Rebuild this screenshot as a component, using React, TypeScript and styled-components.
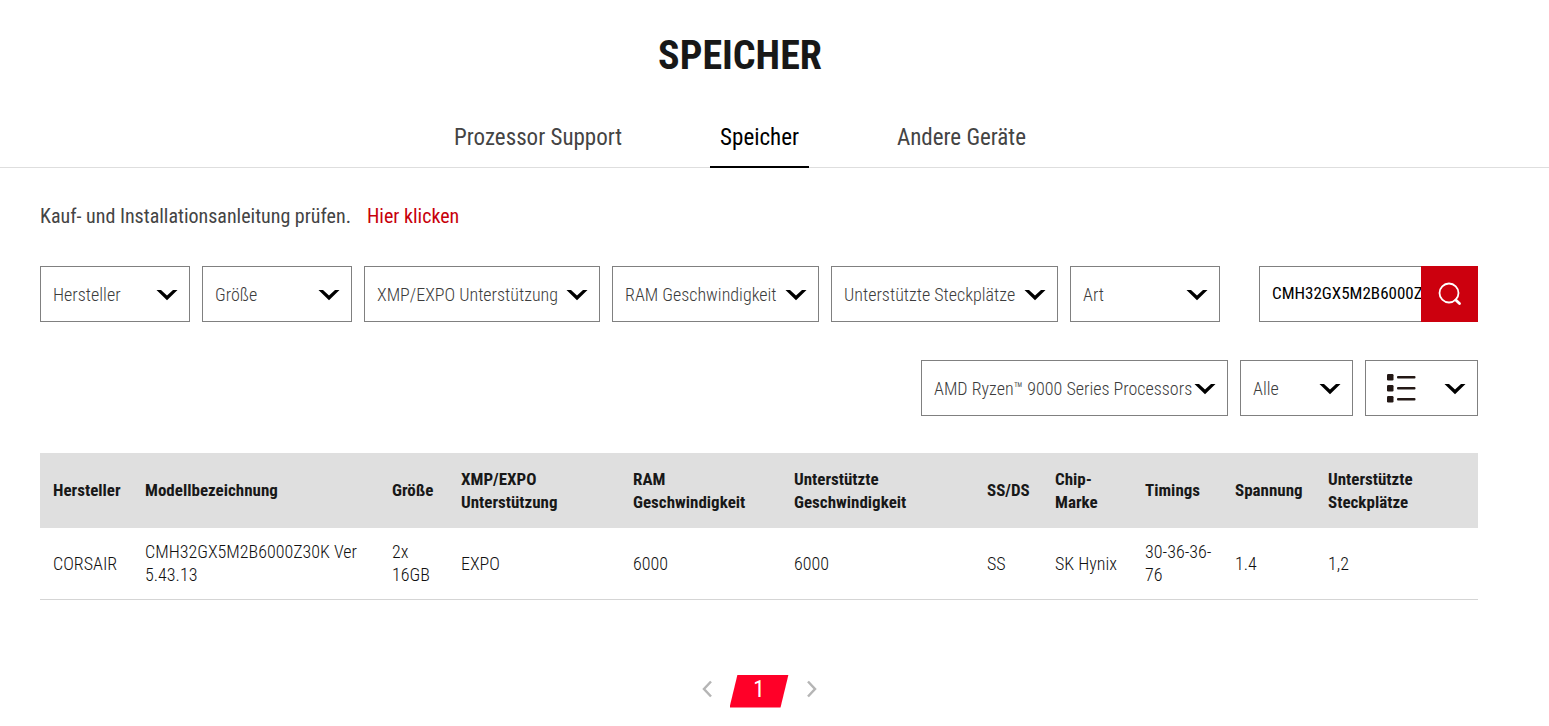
import React, { useState } from "react";
import styled, { createGlobalStyle } from "styled-components";

const GlobalStyle = createGlobalStyle`
  *, *::before, *::after { box-sizing: border-box; }
  body {
    margin: 0;
    background: #fff;
    color: #111;
    font-family: "Roboto Condensed", "Liberation Sans Narrow", Roboto, sans-serif;
    font-size: 18px;
    font-weight: 300;
  }
  button, input, select { font: inherit; }
`;

const Header = styled.header`
  padding: 32px 69px 0 0;
  border-bottom: 1px solid #dedede;
`;

const Title = styled.h1`
  margin: 0 0 36px;
  text-align: center;
  font-size: 40px;
  line-height: 48px;
  font-weight: 700;
  color: #181818;
`;

const Tabs = styled.nav`
  display: flex;
  justify-content: center;
  gap: 78px;
  margin-bottom: -1px;
`;

const Tab = styled.a<{ $active?: boolean }>`
  padding: 8px 10px 14px;
  font-size: 23px;
  line-height: 28px;
  font-weight: 400;
  text-decoration: none;
  color: ${(p) => (p.$active ? "#000" : "#444")};
  border-bottom: 2px solid ${(p) => (p.$active ? "#000" : "transparent")};
`;

const Main = styled.main`
  padding: 36px 71px 18px 40px;
`;

const Notice = styled.p`
  display: flex;
  gap: 16px;
  margin: 0 0 38px;
  font-size: 20px;
  line-height: 24px;
  font-weight: 400;
  color: #444;
`;

const NoticeLink = styled.a`
  color: #c7000b;
  text-decoration: none;
`;

const FilterRow = styled.div`
  display: flex;
  justify-content: space-between;
  margin-bottom: 38px;
`;

const Group = styled.div`
  display: flex;
  gap: 12px;
`;

const ViewRow = styled(Group)`
  justify-content: flex-end;
  margin-bottom: 37px;
`;

const Field = styled.div<{ $width: number }>`
  position: relative;
  width: ${(p) => p.$width}px;
  height: 56px;
`;

const Select = styled.select`
  width: 100%;
  height: 100%;
  padding: 0 12px;
  appearance: none;
  border: 1px solid #808080;
  border-radius: 0;
  background: #fff;
  color: #3c3c3c;
`;

const Chevron = styled.svg`
  position: absolute;
  right: 12px;
  top: 23px;
  width: 22px;
  height: 12px;
  pointer-events: none;
`;

const ListIcon = styled.svg`
  position: absolute;
  left: 21px;
  top: 13px;
  width: 30px;
  height: 30px;
  pointer-events: none;
`;

const Search = styled.form`
  display: flex;
  width: 219px;
  height: 56px;
`;

const SearchInput = styled.input`
  flex: 1;
  min-width: 0;
  padding: 0 0 2px 12px;
  border: 1px solid #808080;
  border-right: 0;
  border-radius: 0;
  color: #000;
  font-size: 17px;
  font-weight: 400;
  background: #fff;
`;

const SearchButton = styled.button`
  display: grid;
  place-items: center;
  width: 57px;
  padding: 0;
  border: 0;
  background: #cc000e;
`;

const Table = styled.table`
  width: 100%;
  table-layout: fixed;
  border-collapse: collapse;
  line-height: 23px;
`;

const HeadCell = styled.th`
  height: 75px;
  padding: 0 8px 0 13px;
  text-align: left;
  font-size: 17px;
  font-weight: 700;
  color: #181818;
  background: #dfdfdf;
`;

const Cell = styled.td`
  height: 71px;
  padding: 0 8px 0 13px;
  border-bottom: 1px solid #d5d5d5;
`;

const Pager = styled.nav`
  display: flex;
  justify-content: center;
  gap: 18px;
  margin-top: 75px;
`;

const Arrow = styled.button`
  display: grid;
  place-items: center;
  width: 10px;
  height: 28px;
  padding: 0;
  border: 0;
  background: none;
`;

const Page = styled.button`
  width: 59px;
  height: 33px;
  padding: 0 0 2px;
  border: 0;
  background: #ff0028;
  clip-path: polygon(8px 0, 100% 0, 51px 100%, 0 100%);
  color: #fff;
  font-size: 23px;
  font-weight: 400;
  line-height: 28px;
`;

const filters = [
  { label: "Hersteller", width: 150 },
  { label: "Größe", width: 150 },
  { label: "XMP/EXPO Unterstützung", width: 236 },
  { label: "RAM Geschwindigkeit", width: 207 },
  { label: "Unterstützte Steckplätze", width: 227 },
  { label: "Art", width: 150 },
];

const columns = [
  { title: "Hersteller", width: 92, value: "CORSAIR" },
  { title: "Modellbezeichnung", width: 247, value: "CMH32GX5M2B6000Z30K Ver 5.43.13" },
  { title: "Größe", width: 69, value: "2x 16GB" },
  { title: "XMP/EXPO Unterstützung", width: 172, value: "EXPO" },
  { title: "RAM Geschwindigkeit", width: 161, value: "6000" },
  { title: "Unterstützte Geschwindigkeit", width: 193, value: "6000" },
  { title: "SS/DS", width: 68, value: "SS" },
  { title: "Chip-Marke", width: 90, value: "SK Hynix" },
  { title: "Timings", width: 90, value: "30-36-36-76" },
  { title: "Spannung", width: 93, value: "1.4" },
  { title: "Unterstützte Steckplätze", width: 163, value: "1,2" },
];

function Dropdown({ label, option = label, width, children }: {
  label: string;
  option?: string;
  width: number;
  children?: React.ReactNode;
}) {
  return (
    <Field $width={width}>
      <Select aria-label={label}>
        <option>{option}</option>
      </Select>
      {children}
      <Chevron viewBox="0 0 22 12" aria-hidden="true">
        <path d="M0.5 1H5L11 6.5L17 1H21.500L11 11.200Z" fill="#000" />
      </Chevron>
    </Field>
  );
}

export default function App() {
  const [query, setQuery] = useState("CMH32GX5M2B6000Z30K");

  return (
    <>
      <GlobalStyle />
      <Header>
        <Title>SPEICHER</Title>
        <Tabs>
          <Tab href="#cpu">Prozessor Support</Tab>
          <Tab href="#memory" $active aria-current="page">Speicher</Tab>
          <Tab href="#devices">Andere Geräte</Tab>
        </Tabs>
      </Header>
      <Main>
        <Notice>
          Kauf- und Installationsanleitung prüfen.
          <NoticeLink href="#guide">Hier klicken</NoticeLink>
        </Notice>
        <FilterRow>
          <Group>
            {filters.map((f) => (
              <Dropdown key={f.label} label={f.label} width={f.width} />
            ))}
          </Group>
          <Search onSubmit={(e) => e.preventDefault()}>
            <SearchInput
              aria-label="Suche"
              value={query}
              onChange={(e) => setQuery(e.target.value)}
            />
            <SearchButton type="submit" aria-label="Suchen">
              <svg width="24" height="24" viewBox="0 0 24 24" fill="none" stroke="#fff" strokeLinecap="round">
                <circle cx="11" cy="11" r="9.500" strokeWidth="1.800" />
                <path d="M17.800 18L21.500 21.500" strokeWidth="2.800" />
              </svg>
            </SearchButton>
          </Search>
        </FilterRow>
        <ViewRow>
          <Dropdown label="Prozessor" option="AMD Ryzen™ 9000 Series Processors" width={307} />
          <Dropdown label="Anzeige" option="Alle" width={113} />
          <Dropdown label="Ansicht" option="" width={113}>
            <ListIcon viewBox="0 0 30 30" aria-hidden="true" fill="#231815">
              {[1, 12, 23].map((y) => (
                <g key={y}>
                  <rect x="1" y={y} width="6.500" height="6.500" rx="1.200" />
                  <rect x="11" y={y + 2} width="18.500" height="2.400" rx="1" />
                </g>
              ))}
            </ListIcon>
          </Dropdown>
        </ViewRow>
        <Table>
          <colgroup>
            {columns.map((c) => (
              <col key={c.title} width={c.width} />
            ))}
          </colgroup>
          <thead>
            <tr>
              {columns.map((c) => (
                <HeadCell key={c.title} scope="col">{c.title}</HeadCell>
              ))}
            </tr>
          </thead>
          <tbody>
            <tr>
              {columns.map((c) => (
                <Cell key={c.title}>{c.value}</Cell>
              ))}
            </tr>
          </tbody>
        </Table>
        <Pager aria-label="Seiten">
          <Arrow type="button" aria-label="Zurück">
            <svg width="10" height="18" viewBox="0 0 10 18" fill="none" stroke="#b5b5b5" strokeWidth="2.500">
              <path d="M9 1.500L2 9L9 16.500" />
            </svg>
          </Arrow>
          <Page type="button" aria-current="page">1</Page>
          <Arrow type="button" aria-label="Weiter">
            <svg width="10" height="18" viewBox="0 0 10 18" fill="none" stroke="#b5b5b5" strokeWidth="2.500">
              <path d="M1 1.500L8 9L1 16.500" />
            </svg>
          </Arrow>
        </Pager>
      </Main>
    </>
  );
}
